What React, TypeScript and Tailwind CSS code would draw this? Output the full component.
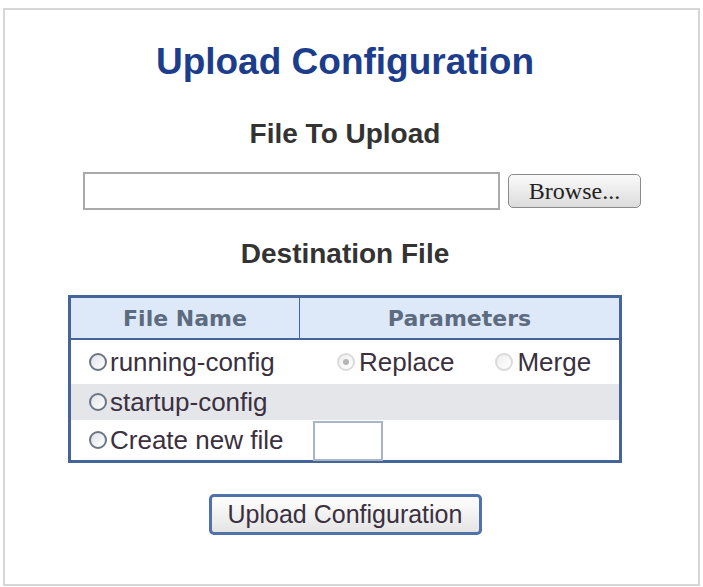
import React from 'react';

const Radio = ({ checked = false, faded = false }: { checked?: boolean; faded?: boolean }) => (
  <span
    className={`inline-flex items-center justify-center w-[18px] h-[18px] rounded-full border-2 shrink-0 ${
      faded ? 'border-[#dadada] bg-gradient-to-br from-[#eeeeee] to-white' : 'border-[#6b7583] bg-gradient-to-br from-[#dfe2e7] to-white'
    }`}
  >
    {checked && <span className="w-[6px] h-[6px] rounded-full bg-[#b4b4b4]" />}
  </span>
);

export default function App() {
  return (
    <div className="w-[703px] h-[587px] bg-white pt-[8px] pl-[3px]" style={{ fontFamily: '"Liberation Sans", Arial, sans-serif' }}>
      <div className="w-[697px] h-[578px] border-2 border-[#d6d6d6]">
        <div className="w-[554px] ml-[63px] flex flex-col">
          {/* Title */}
          <h1 className="mt-[31px] text-center text-[37px] leading-[42px] font-bold text-[#1c3d8c]">
            Upload Configuration
          </h1>
          <h2 className="mt-[35px] text-center text-[28px] leading-[32px] font-bold text-[#333]">File To Upload</h2>

          {/* File input */}
          <div className="mt-[22px] ml-[15px] w-[560px] flex items-center gap-[8px]">
            <div className="w-[417px] h-[38px] border-2 border-[#a9a9a9] bg-white" />
            <button
              className="w-[133px] h-[34px] rounded-[5px] border border-[#8a8a8a] bg-gradient-to-b from-[#fafafa] to-[#dcdcdc] text-[24px] leading-none text-[#222]"
              style={{ fontFamily: '"Liberation Serif", "Times New Roman", serif' }}
            >
              Browse...
            </button>
          </div>

          <h2 className="mt-[28px] text-center text-[28px] leading-[32px] font-bold text-[#333]">Destination File</h2>

          {/* Table */}
          <div className="mt-[25px] border-[3px] border-[#45659a] text-[26px] text-[#3a3040]">
            <div className="flex h-[42px] bg-[#dde9f8] border-b-2 border-[#45659a]">
              <div
                className="w-[229px] border-r border-[#45659a] flex items-center justify-center font-bold text-[22px] text-[#5d6b80]"
                style={{ fontFamily: '"DejaVu Sans", Verdana, sans-serif' }}
              >
                File Name
              </div>
              <div
                className="flex-1 flex items-center justify-center font-bold text-[22px] text-[#5d6b80]"
                style={{ fontFamily: '"DejaVu Sans", Verdana, sans-serif' }}
              >
                Parameters
              </div>
            </div>
            <div className="flex h-[44px] items-center bg-white">
              <div className="w-[229px] pl-[18px] flex items-center gap-[3px]">
                <Radio />
                <span>running-config</span>
              </div>
              <div className="flex-1 flex items-center pl-[37px]">
                <Radio checked faded />
                <span className="ml-[4px]">Replace</span>
                <span className="ml-[41px]"><Radio faded /></span>
                <span className="ml-[4px]">Merge</span>
              </div>
            </div>
            <div className="flex h-[36px] items-center bg-[#e4e6ea]">
              <div className="w-[229px] pl-[18px] flex items-center gap-[3px]">
                <Radio />
                <span>startup-config</span>
              </div>
            </div>
            <div className="flex h-[40px] items-center bg-white">
              <div className="w-[229px] pl-[18px] flex items-center gap-[3px]">
                <Radio />
                <span>Create new file</span>
              </div>
              <div className="flex-1 self-stretch pl-[13px] pt-[1px]">
                <div className="w-[70px] h-[40px] border-2 border-[#a9b4c4] bg-white" />
              </div>
            </div>
          </div>

          {/* Upload button */}
          <div className="mt-[31px] flex justify-center">
            <button className="w-[273px] h-[41px] rounded-[5px] border-[3px] border-[#4f72a8] bg-gradient-to-b from-[#ffffff] to-[#e4e4e4] text-[25px] leading-none text-[#3a3040]">
              Upload Configuration
            </button>
          </div>
        </div>
      </div>
    </div>
  );
}
